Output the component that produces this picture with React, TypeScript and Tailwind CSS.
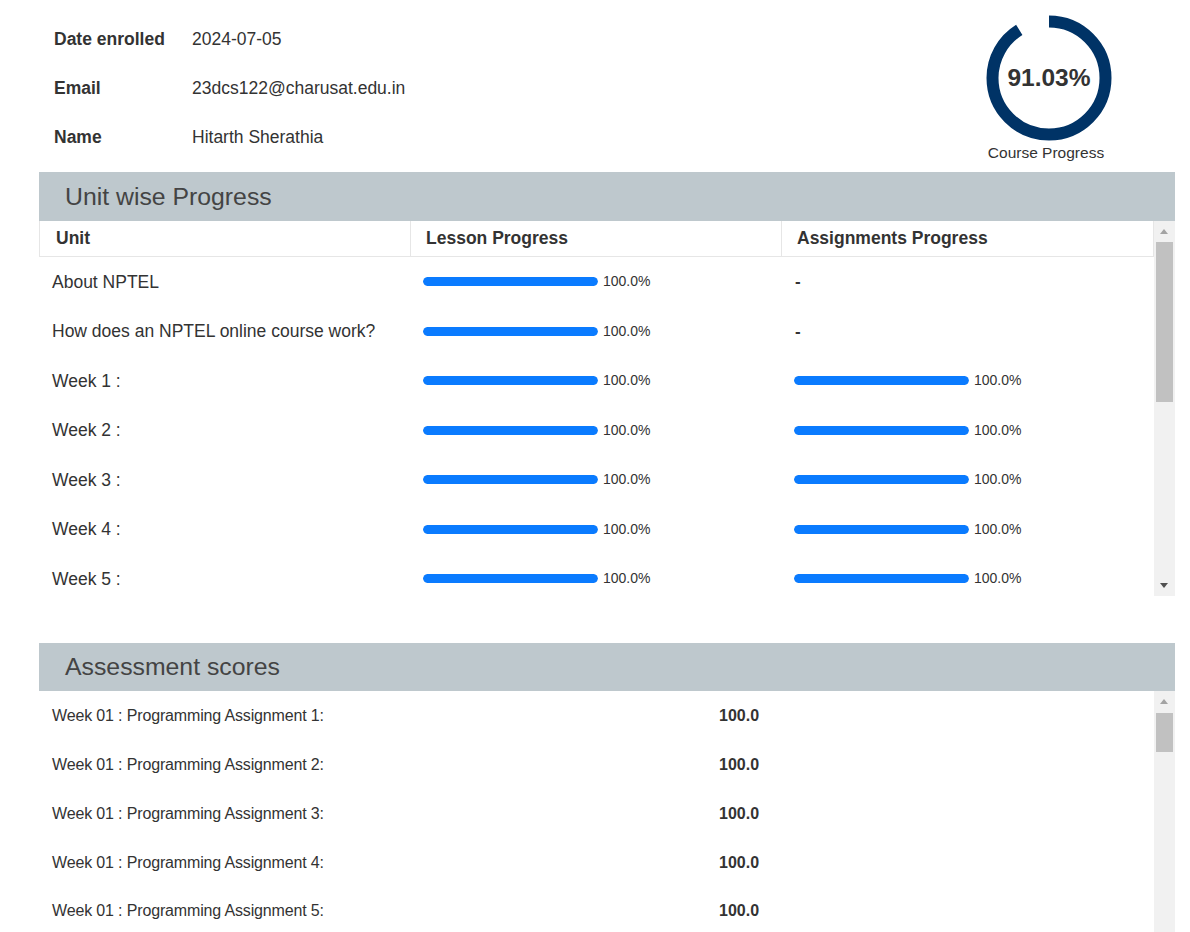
import React from 'react';

const units = [
  { name: 'About NPTEL', lesson: 100, assign: null },
  { name: 'How does an NPTEL online course work?', lesson: 100, assign: null },
  { name: 'Week 1 :', lesson: 100, assign: 100 },
  { name: 'Week 2 :', lesson: 100, assign: 100 },
  { name: 'Week 3 :', lesson: 100, assign: 100 },
  { name: 'Week 4 :', lesson: 100, assign: 100 },
  { name: 'Week 5 :', lesson: 100, assign: 100 },
];

const scores = [1, 2, 3, 4, 5].map((n) => ({
  title: `Week 01 : Programming Assignment ${n}:`,
  score: '100.0',
}));

const Bar = ({ value }: { value: number }) => (
  <div className="flex items-center gap-[5px]">
    <div className="w-[175px] h-[9px] rounded-full bg-[#e9ecef] overflow-hidden">
      <div className="h-full rounded-full bg-[#0a7bff]" style={{ width: `${value}%` }} />
    </div>
    <span className="text-[14px] text-[#333]">{value.toFixed(1)}%</span>
  </div>
);

// fake classic scrollbar
const ScrollBar = ({ thumbTop, thumbHeight }: { thumbTop: number; thumbHeight: number }) => (
  <div className="relative w-[21px] h-full bg-[#f1f1f1] shrink-0">
    <div className="absolute top-[8px] left-[6px] w-0 h-0 border-l-[4.5px] border-r-[4.5px] border-b-[5px] border-l-transparent border-r-transparent border-b-[#a3a3a3]" />
    <div
      className="absolute left-[2px] w-[17px] bg-[#c1c1c1]"
      style={{ top: thumbTop, height: thumbHeight }}
    />
  </div>
);

const ProgressRing = ({ pct }: { pct: number }) => {
  const r = 56.5;
  const c = 2 * Math.PI * r;
  return (
    <div className="relative w-[130px] h-[130px]">
      <svg width="130" height="130" viewBox="0 0 130 130" className="-rotate-90">
        <circle
          cx="65"
          cy="65"
          r={r}
          fill="none"
          stroke="#003366"
          strokeWidth="12"
          strokeDasharray={`${(c * pct) / 100} ${c}`}
        />
      </svg>
      <div className="absolute inset-0 flex items-center justify-center text-[24.5px] font-bold text-[#333]">
        {pct.toFixed(2)}%
      </div>
    </div>
  );
};

export default function App() {
  return (
    <div
      className="h-[932px] overflow-hidden bg-white text-[#333]"
      style={{ fontFamily: '"Liberation Sans", Arial, sans-serif' }}
    >
      <div className="ml-[39px] w-[1136px]">
        {/* Student info + overall progress */}
        <div className="flex justify-between h-[172px]">
          <div className="pt-[15px] pl-[15px] text-[17.5px]">
            {[
              ['Date enrolled', '2024-07-05'],
              ['Email', '23dcs122@charusat.edu.in'],
              ['Name', 'Hitarth Sherathia'],
            ].map(([k, v]) => (
              <div key={k} className="flex items-center h-[49px]">
                <span className="w-[138px] font-bold">{k}</span>
                <span>{v}</span>
              </div>
            ))}
          </div>
          <div className="mr-[61px] pt-[13px] flex flex-col items-center">
            <ProgressRing pct={91.03} />
            <span className="text-[15.5px] -mt-[2px] -ml-[6px]">Course Progress</span>
          </div>
        </div>

        {/* Unit wise progress */}
        <div className="h-[49px] bg-[#bec8cd] flex items-center pl-[26px] text-[24.8px] text-[#444]">
          Unit wise Progress
        </div>
        <div className="flex h-[375px]">
          <div className="flex-1 overflow-hidden">
            <div className="grid grid-cols-[371px_371px_1fr] h-[36px] border-b border-[#e6e6e6] text-[17.5px] font-bold">
              <div className="flex items-center pl-[16px] border-l border-[#e6e6e6]">Unit</div>
              <div className="flex items-center pl-[15px] border-l border-[#e6e6e6]">Lesson Progress</div>
              <div className="flex items-center pl-[15px] border-x border-[#e6e6e6]">Assignments Progress</div>
            </div>
            {units.map((u) => (
              <div key={u.name} className="grid grid-cols-[371px_371px_1fr] h-[49.5px] items-center">
                <div className="pl-[13px] text-[17.5px]">{u.name}</div>
                <div className="pl-[13px]">
                  <Bar value={u.lesson} />
                </div>
                <div className="pl-[13px]">
                  {u.assign === null ? (
                    <span className="pl-[1px] text-[17px] font-bold">-</span>
                  ) : (
                    <Bar value={u.assign} />
                  )}
                </div>
              </div>
            ))}
          </div>
          <div className="relative h-full">
            <ScrollBar thumbTop={21} thumbHeight={160} />
            <div className="absolute bottom-[8px] left-[6px] w-0 h-0 border-l-[4.5px] border-r-[4.5px] border-t-[5px] border-l-transparent border-r-transparent border-t-[#505050]" />
          </div>
        </div>

        {/* Assessment scores */}
        <div className="mt-[47px] h-[48px] bg-[#bec8cd] flex items-center pl-[26px] text-[24.8px] text-[#444]">
          Assessment scores
        </div>
        <div className="flex h-[260px]">
          <div className="flex-1 overflow-hidden pt-[1px]">
            {scores.map((s) => (
              <div key={s.title} className="flex items-center h-[48.75px] text-[16px]">
                <div className="w-[680px] pl-[13px] tracking-[-0.15px]">{s.title}</div>
                <div className="font-bold">{s.score}</div>
              </div>
            ))}
          </div>
          <ScrollBar thumbTop={22} thumbHeight={39} />
        </div>
      </div>
    </div>
  );
}
